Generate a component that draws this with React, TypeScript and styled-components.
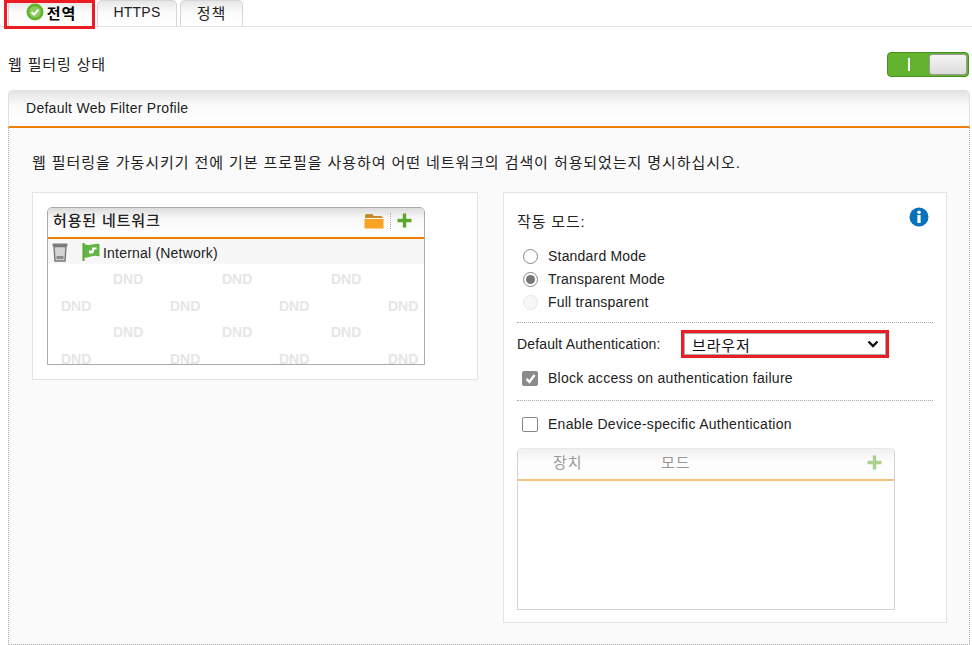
import React from 'react';
import styled, { createGlobalStyle } from 'styled-components';

const GlobalStyle = createGlobalStyle`
  html, body {
    margin: 0;
    padding: 0;
    background: #ffffff;
    font-family: "Liberation Sans", "Noto Sans CJK KR", Arial, sans-serif;
    font-size: 14px;
    color: #222;
  }
  * { box-sizing: border-box; }
`;

const dndRows = [
  { offset: 65, count: 3 },
  { offset: 13, count: 4 },
  { offset: 65, count: 3 },
  { offset: 13, count: 4 },
];

const CheckBadge = () => (
  <svg width="18" height="18" viewBox="0 0 18 18">
    <circle cx="9" cy="9" r="8.5" fill="#63b32e" />
    <circle cx="9" cy="9" r="5.8" fill="#8ccb5e" />
    <path d="M5.6 9.2 L8 11.6 L12.4 6.6" fill="none" stroke="#fff" strokeWidth="2" />
  </svg>
);

const FolderIcon = () => (
  <svg width="20" height="16" viewBox="0 0 20 16">
    <path d="M1 2.5 Q1 1 2.5 1 H8 L10 3 H17 Q18.5 3 18.5 4.5 V5 H1 Z" fill="#c98a2c" />
    <path d="M0.5 6 H19.5 V15 Q19.5 15.5 19 15.5 H1 Q0.5 15.5 0.5 15 Z" fill="#f7a326" />
  </svg>
);

const PlusIcon = ({ faded }: { faded?: boolean }) => (
  <svg width="15" height="15" viewBox="0 0 15 15" opacity={faded ? 0.5 : 1}>
    <path d="M5.8 0.5 H9.2 V5.8 H14.5 V9.2 H9.2 V14.5 H5.8 V9.2 H0.5 V5.8 H5.8 Z" fill="#5aa82a" />
  </svg>
);

const TrashIcon = () => (
  <svg width="16" height="20" viewBox="0 0 16 20">
    <rect x="0.5" y="1.5" width="15" height="3" rx="1" fill="#7c7c7c" />
    <path d="M2 4.5 H14 L13 19 H3 Z" fill="#d4d4d4" stroke="#777" strokeWidth="1.4" />
    <rect x="4.5" y="14" width="7" height="3" fill="#8a8a8a" />
  </svg>
);

const FlagIcon = () => (
  <svg width="18" height="18" viewBox="0 0 18 18">
    <rect x="0.5" y="0" width="2" height="18" fill="#56a82c" />
    <path d="M2 1 Q6 2.5 10 1.5 T17.5 1 V13.5 Q13 12 9 13.5 T2 14.5 Z" fill="#62b545" />
    <path d="M7 8.5 H11 V5.5 L14.5 5.5 M11 9.5 H7" fill="none" stroke="#fff" strokeWidth="1.8" />
  </svg>
);

const InfoIcon = () => (
  <svg width="20" height="20" viewBox="0 0 20 20">
    <circle cx="10" cy="10" r="9.5" fill="#0a72bd" />
    <circle cx="10" cy="5.2" r="1.8" fill="#fff" />
    <rect x="8.4" y="8" width="3.2" height="8" fill="#fff" />
  </svg>
);

const ChevronIcon = () => (
  <svg width="12" height="8" viewBox="0 0 12 8">
    <path d="M1.5 1.5 L6 6 L10.5 1.5" fill="none" stroke="#111" strokeWidth="2.4" />
  </svg>
);

const App = () => (
  <Page>
    <GlobalStyle />
    <TabBar>
      <Tab $active $width={86}>
        <CheckBadge />
        <Hangul>전역</Hangul>
      </Tab>
      <Tab $width={80}>HTTPS</Tab>
      <Tab $width={63}>
        <Hangul>정책</Hangul>
      </Tab>
    </TabBar>

    <StatusRow>
      <Hangul>웹 필터링 상태</Hangul>
      <Toggle>
        <ToggleMark />
        <ToggleKnob />
      </Toggle>
    </StatusRow>

    <PanelHeader>Default Web Filter Profile</PanelHeader>
    <PanelBody>
      <Intro>웹 필터링을 가동시키기 전에 기본 프로필을 사용하여 어떤 네트워크의 검색이 허용되었는지 명시하십시오.</Intro>
      <Columns>
        <LeftCard>
          <ListBox>
            <ListHeader>
              <ListTitle>허용된 네트워크</ListTitle>
              <ListTools>
                <FolderIcon />
                <ToolDivider />
                <PlusIcon />
              </ListTools>
            </ListHeader>
            <NetworkRow>
              <TrashIcon />
              <FlagIcon />
              <span>Internal (Network)</span>
            </NetworkRow>
            <DndArea>
              {dndRows.map((row, i) => (
                <DndRow key={i} $offset={row.offset}>
                  {Array.from({ length: row.count }).map((_, j) => (
                    <DndMark key={j}>DND</DndMark>
                  ))}
                </DndRow>
              ))}
            </DndArea>
          </ListBox>
        </LeftCard>

        <RightCard>
          <InfoSlot>
            <InfoIcon />
          </InfoSlot>
          <ModeTitle>작동 모드:</ModeTitle>
          <RadioGroup>
            <OptionRow>
              <Radio />
              <span>Standard Mode</span>
            </OptionRow>
            <OptionRow>
              <Radio $checked />
              <span>Transparent Mode</span>
            </OptionRow>
            <OptionRow>
              <Radio $disabled />
              <span>Full transparent</span>
            </OptionRow>
          </RadioGroup>
          <DottedRule />
          <AuthRow>
            <AuthLabel>Default Authentication:</AuthLabel>
            <Highlight>
              <SelectBox>
                <Hangul>브라우저</Hangul>
                <ChevronIcon />
              </SelectBox>
            </Highlight>
          </AuthRow>
          <CheckRow>
            <CheckBox $checked>
              <svg width="13" height="13" viewBox="0 0 13 13">
                <path d="M2.5 6.8 L5.4 9.8 L10.6 3" fill="none" stroke="#fff" strokeWidth="2.4" />
              </svg>
            </CheckBox>
            <span>Block access on authentication failure</span>
          </CheckRow>
          <DottedRule />
          <EnableRow>
            <CheckBox />
            <span>Enable Device-specific Authentication</span>
          </EnableRow>
          <DeviceTable>
            <DeviceHeader>
              <DeviceCol $width={108}>장치</DeviceCol>
              <DeviceCol $width={100}>모드</DeviceCol>
              <DeviceAdd>
                <PlusIcon faded />
              </DeviceAdd>
            </DeviceHeader>
          </DeviceTable>
        </RightCard>
      </Columns>
    </PanelBody>
  </Page>
);

export default App;

const Page = styled.div`
  width: 972px;
  height: 645px;
  overflow: hidden;
  background: #fff;
  letter-spacing: 0.2px;
`;

const Hangul = styled.span`
  font-size: 15px;
  letter-spacing: 0.85px;
`;

const TabBar = styled.div`
  display: flex;
  gap: 3px;
  height: 27px;
  padding-left: 8px;
  border-bottom: 1px solid #e2e2e2;
`;

const Tab = styled.div<{ $active?: boolean; $width: number }>`
  position: relative;
  display: flex;
  align-items: center;
  justify-content: center;
  gap: 3px;
  width: ${(p) => p.$width}px;
  height: 26px;
  padding-bottom: 3px;
  border: 1px solid #d6d6d6;
  border-bottom: none;
  border-radius: 5px 5px 0 0;
  background: linear-gradient(#e6e6e6, #fbfbfb 45%, #fff);
  font-size: 14px;
  color: #222;
  ${(p) =>
    p.$active &&
    `
    font-weight: bold;
    color: #000;
    &::after {
      content: '';
      box-sizing: border-box;
      position: absolute;
      left: -5px;
      top: -1px;
      width: 91px;
      height: 29px;
      border: 3px solid #ed1c24;
    }
  `}
`;

const StatusRow = styled.div`
  display: flex;
  align-items: center;
  justify-content: space-between;
  height: 63px;
  padding: 9px 3px 0 8px;
  color: #222;
`;

const Toggle = styled.div`
  display: flex;
  align-items: center;
  width: 82px;
  height: 25px;
  margin-top: 3px;
  padding: 0 1px 0 20px;
  border: 1px solid #4a8f22;
  border-radius: 4px;
  background: #63b32e;
`;

const ToggleMark = styled.span`
  width: 2px;
  height: 13px;
  background: #fff;
`;

const ToggleKnob = styled.span`
  width: 38px;
  height: 21px;
  margin-left: auto;
  border-radius: 3px;
  border: 1px solid #9a9a9a;
  background: linear-gradient(#f4f4f4, #dcdcdc);
`;

const PanelHeader = styled.div`
  display: flex;
  align-items: center;
  height: 38px;
  margin: 0 2px 0 8px;
  padding: 0 17px 2px;
  border: 1px solid #e0e0e0;
  border-bottom: 2px solid #ee7f00;
  border-radius: 5px 5px 0 0;
  background: linear-gradient(#e4e4e4, #fafafa 40%, #fff);
  font-size: 14px;
  letter-spacing: 0.27px;
  color: #222;
`;

const PanelBody = styled.div`
  height: 517px;
  margin: 0 2px 0 8px;
  padding: 25px 22px 0 23px;
  border: 1px dotted #aaa;
  border-top: none;
  background: #fafafa;
`;

const Intro = styled(Hangul).attrs({ as: 'div' })`
  height: 20px;
  line-height: 20px;
  letter-spacing: 0.92px;
  white-space: nowrap;
  color: #222;
`;

const Columns = styled.div`
  display: flex;
  align-items: flex-start;
  gap: 25px;
  margin-top: 19px;
`;

const LeftCard = styled.div`
  width: 446px;
  height: 188px;
  padding: 14px;
  border: 1px solid #e4e4e4;
  background: #fff;
`;

const ListBox = styled.div`
  width: 378px;
  height: 158px;
  border: 1px solid #aaa;
  border-radius: 5px 5px 0 0;
  overflow: hidden;
`;

const ListHeader = styled.div`
  display: flex;
  align-items: center;
  justify-content: space-between;
  height: 31px;
  padding: 0 12px 6px 5px;
  border-bottom: 2px solid #ee7f00;
  background: linear-gradient(#dcdcdc, #f8f8f8 35%, #fff);
`;

const ListTitle = styled(Hangul)`
  color: #222;
  font-weight: 500;
`;

const ListTools = styled.div`
  display: flex;
  align-items: center;
  gap: 6px;
  margin-top: 2px;
`;

const ToolDivider = styled.span`
  height: 16px;
  border-left: 1px dotted #aaa;
`;

const NetworkRow = styled.div`
  display: flex;
  align-items: center;
  height: 25px;
  padding-left: 4px;
  background: #f7f7f7;
  font-size: 14px;
  color: #222;

  svg:first-child {
    margin-right: 14px;
  }
  svg:nth-child(2) {
    margin-right: 3px;
  }
  span {
    margin-top: 2px;
  }
`;

const DndArea = styled.div`
  display: flex;
  flex-direction: column;
  padding-top: 7px;
`;

const DndRow = styled.div<{ $offset: number }>`
  display: flex;
  gap: 76px;
  height: 26.6px;
  padding-left: ${(p) => p.$offset}px;
`;

const DndMark = styled.span`
  width: 33px;
  font-size: 14px;
  line-height: 16px;
  font-weight: bold;
  letter-spacing: 0;
  color: #e6e6e6;
`;

const RightCard = styled.div`
  position: relative;
  width: 444px;
  height: 431px;
  padding: 0 13px;
  border: 1px solid #e4e4e4;
  background: #fff;
  font-size: 14px;
  color: #222;
`;

const InfoSlot = styled.div`
  position: absolute;
  top: 14px;
  right: 17px;
`;

const ModeTitle = styled(Hangul).attrs({ as: 'div' })`
  height: 20px;
  margin-top: 19px;
  line-height: 20px;
`;

const RadioGroup = styled.div`
  display: flex;
  flex-direction: column;
  gap: 3px;
  margin: 14px 0 10px;
`;

const OptionRow = styled.label`
  display: flex;
  align-items: center;
  gap: 10px;
  height: 20px;
  padding-left: 6px;
`;

const Radio = styled.span<{ $checked?: boolean; $disabled?: boolean }>`
  position: relative;
  width: 15px;
  height: 15px;
  border-radius: 50%;
  border: 1px solid ${(p) => (p.$disabled ? '#e6e6e6' : '#888')};
  background: ${(p) => (p.$disabled ? '#f8f8f8' : '#fff')};
  ${(p) =>
    p.$checked &&
    `
    &::after {
      content: '';
      position: absolute;
      left: 2px;
      top: 2px;
      width: 9px;
      height: 9px;
      border-radius: 50%;
      background: #777;
    }
  `}
`;

const DottedRule = styled.div`
  border-top: 1px dotted #aaa;
`;

const AuthRow = styled.div`
  display: flex;
  align-items: center;
  height: 28px;
  margin-top: 7px;
`;

const AuthLabel = styled.span`
  width: 164px;
  letter-spacing: 0.15px;
`;

const Highlight = styled.div`
  width: 208px;
  height: 28px;
  border: 3px solid #ed1c24;
`;

const SelectBox = styled.div`
  display: flex;
  align-items: center;
  justify-content: space-between;
  height: 100%;
  padding: 0 6px 0 7px;
  border: 1px solid #aaa;
  background: #fff;
  color: #111;
`;

const CheckRow = styled.label`
  display: flex;
  align-items: center;
  gap: 10px;
  height: 20px;
  margin: 10px 0 12px;
  padding-left: 5px;
  letter-spacing: 0.28px;
`;

const EnableRow = styled(CheckRow)`
  margin: 13px 0 14px;
`;

const CheckBox = styled.span<{ $checked?: boolean }>`
  display: flex;
  align-items: center;
  justify-content: center;
  width: 16px;
  height: 15px;
  border-radius: 2px;
  border: 1px solid ${(p) => (p.$checked ? '#8a8a8a' : '#888')};
  background: ${(p) => (p.$checked ? '#8a8a8a' : '#fff')};
`;

const DeviceTable = styled.div`
  width: 378px;
  height: 162px;
  border: 1px solid #d4d4d4;
  border-top-color: #e8e8e8;
  border-radius: 5px 5px 0 0;
  overflow: hidden;
`;

const DeviceHeader = styled.div`
  display: flex;
  align-items: center;
  height: 32px;
  padding: 0 12px 6px 35px;
  border-bottom: 2px solid #f9c07c;
  background: linear-gradient(#f0f0f0, #fcfcfc 40%, #fff);
  font-size: 15px;
  letter-spacing: 0.85px;
  color: #999;
`;

const DeviceCol = styled.span<{ $width: number }>`
  width: ${(p) => p.$width}px;
`;

const DeviceAdd = styled.span`
  display: flex;
  margin-left: auto;
  margin-top: 2px;
`;
